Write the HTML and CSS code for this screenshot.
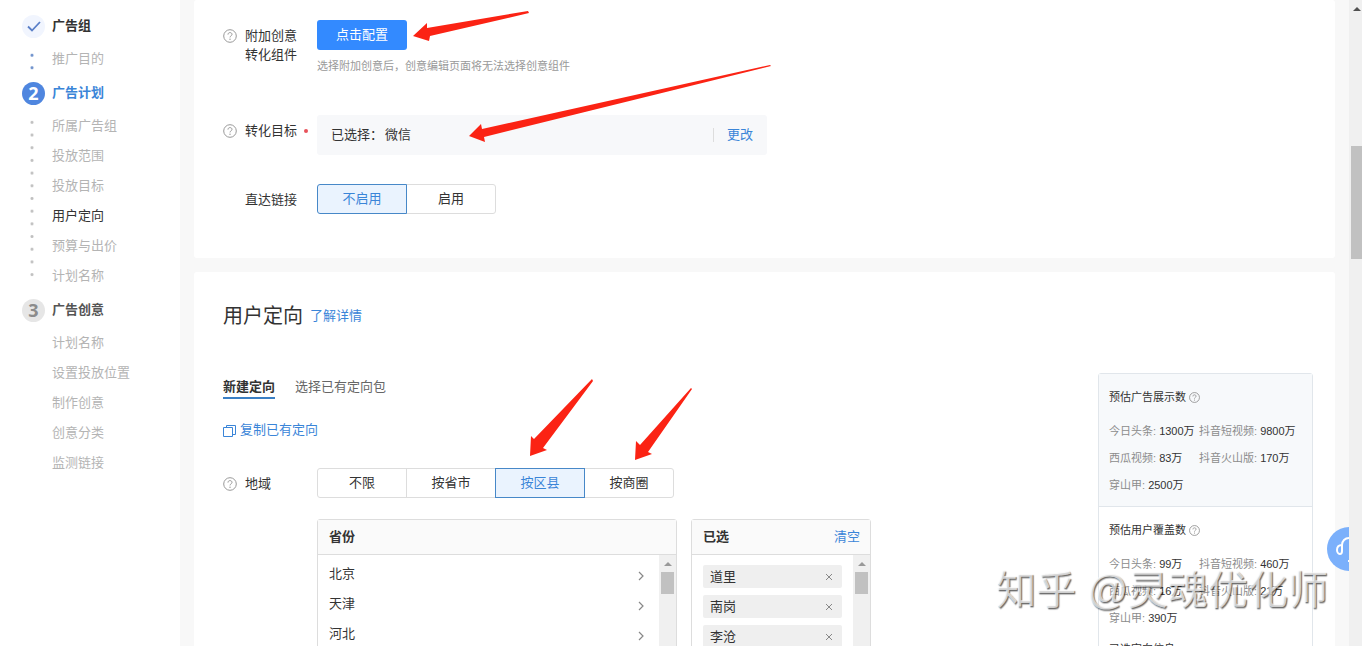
FILE: index.html
```
<!DOCTYPE html>
<html lang="zh-CN">
<head>
  <meta charset="UTF-8">
  <meta name="viewport" content="width=device-width, initial-scale=1.0">
  <title>广告计划</title>
  <link rel="stylesheet" href="styles.css">
</head>
<body>
  <svg class="defs" aria-hidden="true">
    <symbol id="icon-help" viewBox="0 0 14 14">
      <circle cx="7" cy="7" r="6.3" fill="none" stroke="currentColor"/>
      <path d="M5 5.6C5 4.3 5.8 3.6 7 3.6s2 .7 2 1.8c0 1.4-2 1.5-2 3" fill="none" stroke="currentColor"/>
      <circle cx="7" cy="10.2" r=".7" fill="currentColor"/>
    </symbol>
    <symbol id="icon-right" viewBox="0 0 6 10">
      <path d="M1 1l4 4-4 4" fill="none" stroke="currentColor" stroke-width="1.2"/>
    </symbol>
    <symbol id="icon-close" viewBox="0 0 8 8">
      <path d="M1 1l6 6M7 1L1 7" fill="none" stroke="currentColor"/>
    </symbol>
    <symbol id="icon-up" viewBox="0 0 8 4">
      <path d="M0 4l4-4 4 4z" fill="currentColor"/>
    </symbol>
  </svg>

  <div class="page">
    <nav class="sidebar">
      <section class="step">
        <h3 class="step-title">
          <span class="badge badge-done"><svg width="14" height="11" viewBox="0 0 14 11"><path d="M1 5.5l4 4L13 1" fill="none" stroke="currentColor" stroke-width="1.8"/></svg></span>
          广告组
        </h3>
        <div class="step-body">
          <span class="dots dots-blue"></span>
          <ul>
            <li><a href="#">推广目的</a></li>
          </ul>
        </div>
      </section>
      <section class="step">
        <h3 class="step-title current"><span class="badge badge-current">2</span>广告计划</h3>
        <div class="step-body">
          <span class="dots dots-long"></span>
          <ul>
            <li><a href="#">所属广告组</a></li>
            <li><a href="#">投放范围</a></li>
            <li><a href="#">投放目标</a></li>
            <li><a href="#" class="active">用户定向</a></li>
            <li><a href="#">预算与出价</a></li>
            <li><a href="#">计划名称</a></li>
          </ul>
        </div>
      </section>
      <section class="step">
        <h3 class="step-title todo"><span class="badge badge-todo">3</span>广告创意</h3>
        <div class="step-body">
          <span class="dots-none"></span>
          <ul>
            <li><a href="#">计划名称</a></li>
            <li><a href="#">设置投放位置</a></li>
            <li><a href="#">制作创意</a></li>
            <li><a href="#">创意分类</a></li>
            <li><a href="#">监测链接</a></li>
          </ul>
        </div>
      </section>
    </nav>

    <main class="main">
      <section class="card card-convert">
        <div class="row row-addon">
          <div class="label"><svg class="help"><use href="#icon-help"/></svg><span>附加创意<br>转化组件</span></div>
          <div class="control">
            <button class="btn-primary">点击配置</button>
            <p class="hint">选择附加创意后，创意编辑页面将无法选择创意组件</p>
          </div>
        </div>
        <div class="row row-goal">
          <div class="label"><svg class="help"><use href="#icon-help"/></svg><span>转化目标</span><i class="required"></i></div>
          <div class="goal">
            <span>已选择：</span>
            <span>微信</span>
            <a href="#">更改</a>
          </div>
        </div>
        <div class="row">
          <div class="label label-plain"><span>直达链接</span></div>
          <div class="segment">
            <button class="on">不启用</button>
            <button>启用</button>
          </div>
        </div>
      </section>

      <section class="card card-target">
        <div class="target">
          <header class="card-title">
            <h2>用户定向</h2>
            <a href="#">了解详情</a>
          </header>
          <div class="tabs">
            <button class="tab tab-on">新建定向</button>
            <button class="tab">选择已有定向包</button>
          </div>
          <a href="#" class="copy">
            <svg width="13" height="13" viewBox="0 0 13 13" fill="none" stroke="currentColor"><path d="M.5 3.5h9v9h-9zM3.5 3.5v-2h9v9h-3"/></svg>
            复制已有定向
          </a>
          <div class="row">
            <div class="label"><svg class="help"><use href="#icon-help"/></svg><span>地域</span></div>
            <div class="control">
              <div class="segment">
                <button>不限</button>
                <button>按省市</button>
                <button class="on">按区县</button>
                <button>按商圈</button>
              </div>
              <div class="pickers">
                <div class="picker picker-province">
                  <div class="picker-head"><b>省份</b></div>
                  <div class="picker-body">
                    <ul class="provinces">
                      <li><button>北京<svg><use href="#icon-right"/></svg></button></li>
                      <li><button>天津<svg><use href="#icon-right"/></svg></button></li>
                      <li><button>河北<svg><use href="#icon-right"/></svg></button></li>
                    </ul>
                    <div class="scroll"><svg><use href="#icon-up"/></svg><span class="thumb"></span></div>
                  </div>
                </div>
                <div class="picker picker-chosen">
                  <div class="picker-head"><b>已选</b><a href="#">清空</a></div>
                  <div class="picker-body">
                    <ul class="chips">
                      <li>道里<button aria-label="删除道里"><svg><use href="#icon-close"/></svg></button></li>
                      <li>南岗<button aria-label="删除南岗"><svg><use href="#icon-close"/></svg></button></li>
                      <li>李沧<button aria-label="删除李沧"><svg><use href="#icon-close"/></svg></button></li>
                    </ul>
                    <div class="scroll"><svg><use href="#icon-up"/></svg><span class="thumb"></span></div>
                  </div>
                </div>
              </div>
            </div>
          </div>
        </div>

        <aside class="estimate">
          <section class="estimate-box estimate-top">
            <h4>预估广告展示数<svg class="help-small"><use href="#icon-help"/></svg></h4>
            <ul>
              <li>今日头条: <b>1300万</b></li>
              <li>抖音短视频: <b>9800万</b></li>
              <li>西瓜视频: <b>83万</b></li>
              <li>抖音火山版: <b>170万</b></li>
              <li>穿山甲: <b>2500万</b></li>
            </ul>
          </section>
          <section class="estimate-box">
            <h4>预估用户覆盖数<svg class="help-small"><use href="#icon-help"/></svg></h4>
            <ul>
              <li>今日头条: <b>99万</b></li>
              <li>抖音短视频: <b>460万</b></li>
              <li>西瓜视频: <b>16万</b></li>
              <li>抖音火山版: <b>21万</b></li>
              <li>穿山甲: <b>390万</b></li>
            </ul>
            <h4>已选定向信息</h4>
          </section>
        </aside>
      </section>

      <button class="service" aria-label="客服">
        <svg width="44" height="44" viewBox="0 0 44 44" fill="none" stroke="#fff" stroke-width="2">
          <path d="M15 18c-3 0-5 2-5 5s2 4 3 4 2-1 2-3v-6c0-4 3-7 7-7s7 3 7 7v6c0 2 1 3 2 3s3-1 3-4-2-5-4-5"/>
          <path d="M31 27c0 4-3 7-10 7"/>
        </svg>
      </button>
    </main>

    <div class="page-scroll"><svg><use href="#icon-up"/></svg><span class="page-thumb"></span></div>

    <svg class="arrows" width="800" height="480" viewBox="0 0 800 480" fill="#fb2314">
      <path d="M413 36l14-13v5l101-17 1 2-99 23-1 5z"/>
      <path d="M469 136l12-12 1 5L770 65l1 1-287 71 1 5z"/>
      <path d="M530 456l1-20 3 3 58-60 1 2-50 67 4 2z"/>
      <path d="M635 460l1-19 4 4 51-57 1 1-44 63 4 2z"/>
    </svg>
    <div class="watermark">知乎 @灵魂优化师</div>
  </div>
</body>
</html>
```
FILE: styles.css
```
* {
  box-sizing: border-box;
}
body {
  margin: 0;
  background: #f8f8f8;
  color: #333;
  font-family: "Liberation Sans", "Noto Sans CJK SC", sans-serif;
  font-size: 13px;
  line-height: 18px;
}
ul, h2, h3, h4, p {
  margin: 0;
  padding: 0;
  list-style: none;
  font-weight: normal;
}
a {
  color: #3a85d8;
  text-decoration: none;
}
button {
  font: inherit;
  color: inherit;
  padding: 0;
  border: none;
  background: none;
  cursor: pointer;
}
.defs {
  display: none;
}
.page {
  position: relative;
  display: flex;
  height: 100vh;
  overflow: hidden;
}

/* sidebar */
.sidebar {
  flex: 0 0 180px;
  padding-top: 9px;
  background: #fff;
}
.step {
  margin-bottom: 2px;
}
.step-title {
  display: flex;
  align-items: center;
  gap: 7px;
  height: 34px;
  padding-left: 22px;
  font-size: 13px;
  font-weight: bold;
}
.step-title.current {
  color: #3a85d8;
}
.step-title.todo {
  color: #555;
}
.badge {
  display: flex;
  align-items: center;
  justify-content: center;
  width: 23px;
  height: 23px;
  border-radius: 50%;
  font-family: "Noto Sans", sans-serif;
  font-size: 18px;
}
.badge-done {
  background: #f1f5fe;
  color: #5a7fc8;
}
.badge-current {
  background: #4f86df;
  color: #fff;
}
.badge-todo {
  background: #e6e6e6;
  color: #8c8c8c;
}
.step-body {
  display: flex;
  padding-top: 1px;
}
.step-body a {
  display: block;
  line-height: 30px;
  color: #b4b4b4;
}
.step-body a.active {
  color: #333;
}
.dots {
  width: 4px;
  margin: 5px 18px 0 30px;
  background-image: radial-gradient(circle, #c0c0c0 1px, transparent 2px);
  background-size: 4px 13px;
  background-repeat: no-repeat round;
}
.dots-blue {
  background-image: radial-gradient(circle, #6f92cc 1px, transparent 2px);
}
.dots-long {
  margin-bottom: 10px;
}
.dots-none {
  width: 52px;
}

/* content */
.main {
  position: relative;
  flex: 1;
  min-width: 0;
  padding: 0 14px;
  overflow: hidden;
}
.card {
  background: #fff;
  border-radius: 3px;
}
.card-convert {
  padding: 20px 29px 44px;
  margin-bottom: 14px;
}
.card-target {
  display: flex;
  padding: 29px 22px 29px 29px;
}
.row {
  display: flex;
  align-items: flex-start;
}
.row-addon {
  margin-bottom: 40px;
}
.row-goal {
  margin-bottom: 29px;
}
.label {
  display: flex;
  flex: 0 0 94px;
  padding-top: 6px;
  line-height: 19px;
}
.label-plain {
  padding-left: 22px;
}
.help {
  width: 14px;
  height: 14px;
  margin: 3px 8px 0 0;
  color: #999;
}
.required {
  width: 4px;
  height: 4px;
  margin: 8px 0 0 7px;
  border-radius: 50%;
  background: #e8525a;
}
.btn-primary {
  display: block;
  width: 90px;
  height: 30px;
  border-radius: 3px;
  background: #338aff;
  color: #fff;
}
.hint {
  margin-top: 7px;
  font-size: 11px;
  color: #999;
}
.goal {
  display: flex;
  align-items: center;
  gap: 2px;
  flex: 0 1 450px;
  height: 40px;
  padding: 0 14px;
  border-radius: 3px;
  background: #f7f8fa;
}
.goal a {
  margin-left: auto;
  padding-left: 13px;
  border-left: 1px solid #ddd;
  line-height: 14px;
}
.segment {
  display: flex;
}
.segment button {
  width: 90px;
  height: 30px;
  margin-right: -1px;
  border: 1px solid #ddd;
  background: #fff;
}
.segment button:first-child {
  border-radius: 3px 0 0 3px;
}
.segment button:last-child {
  border-radius: 0 3px 3px 0;
}
.segment .on {
  position: relative;
  border-color: #4788c8;
  background: #eaf3fe;
  color: #3a85d8;
}

/* targeting */
.target {
  flex: 1;
}
.card-title {
  display: flex;
  align-items: center;
  gap: 7px;
  height: 30px;
}
.card-title h2 {
  font-size: 20px;
}
.tabs {
  display: flex;
  gap: 20px;
  margin-top: 45px;
}
.tab {
  height: 23px;
  border-bottom: 2px solid transparent;
  line-height: 20px;
  color: #666;
}
.tab-on {
  border-color: #3a7fc4;
  font-weight: bold;
  color: #333;
}
.copy {
  display: flex;
  align-items: center;
  gap: 4px;
  width: max-content;
  height: 20px;
  margin: 21px 0 28px;
}
.pickers {
  display: flex;
  gap: 14px;
  margin-top: 21px;
}
.picker {
  border: 1px solid #ddd;
  border-radius: 3px;
}
.picker-province {
  width: 360px;
}
.picker-chosen {
  width: 180px;
}
.picker-head {
  display: flex;
  justify-content: space-between;
  align-items: center;
  height: 35px;
  padding: 0 10px 0 11px;
  border-bottom: 1px solid #ddd;
  background: #fafafa;
}
.picker-body {
  display: flex;
  height: 240px;
  overflow: hidden;
}
.picker-body ul {
  flex: 1;
}
.provinces {
  padding-top: 4px;
}
.provinces button {
  display: flex;
  justify-content: space-between;
  align-items: center;
  width: 100%;
  height: 30px;
  padding: 0 15px 0 11px;
}
.provinces svg {
  width: 6px;
  height: 10px;
  margin-top: 4px;
  color: #888;
}
.chips {
  padding: 10px 11px;
}
.chips li {
  display: flex;
  justify-content: space-between;
  align-items: center;
  height: 23px;
  margin-bottom: 7px;
  padding: 0 9px 0 7px;
  border-radius: 2px;
  background: #efefef;
}
.chips button,
.chips svg {
  display: block;
  width: 8px;
  height: 8px;
  color: #888;
}
.scroll {
  display: flex;
  flex-direction: column;
  align-items: center;
  gap: 6px;
  width: 17px;
  padding-top: 7px;
  background: #f0f0f0;
}
.scroll svg {
  width: 8px;
  height: 4px;
  color: #999;
}
.thumb {
  width: 13px;
  height: 22px;
  background: #c1c1c1;
}

/* estimate panel */
.estimate {
  flex: 0 0 215px;
  margin-top: 72px;
  border: 1px solid #e1e6eb;
  border-radius: 3px;
  font-size: 11px;
}
.estimate-box {
  padding: 10px 0 7px 10px;
}
.estimate-top {
  border-bottom: 1px solid #e1e6eb;
  background: #f7f9fb;
}
.estimate h4 {
  display: flex;
  align-items: center;
  gap: 3px;
  height: 26px;
  margin-bottom: 8px;
  font-size: 11px;
}
.help-small {
  width: 11px;
  height: 11px;
  color: #888;
}
.estimate ul {
  display: grid;
  grid-template-columns: 90px 1fr;
  margin-bottom: 4px;
}
.estimate-top ul {
  margin-bottom: 0;
}
.estimate li {
  line-height: 27px;
  color: #8c8c8c;
  white-space: nowrap;
}
.estimate b {
  font-weight: normal;
  color: #333;
}
.service {
  position: absolute;
  top: 527px;
  right: -22px;
  width: 44px;
  height: 44px;
  border-radius: 50%;
  background: #7bb0fb;
}

.page-scroll {
  display: flex;
  flex: 0 0 13px;
  flex-direction: column;
  align-items: center;
  padding: 7px 0 0 2px;
  background: #f0f0f0;
}
.page-scroll svg {
  width: 8px;
  height: 4px;
  color: #505050;
}
.page-thumb {
  width: 11px;
  height: 113px;
  margin-top: 135px;
  background: #c1c1c1;
}

/* annotations over the page */
.arrows {
  position: absolute;
  top: 0;
  left: 0;
  pointer-events: none;
}
.watermark {
  position: absolute;
  right: 34px;
  bottom: 26px;
  font-size: 40px;
  line-height: 60px;
  color: rgba(255, 255, 255, 0.7);
  text-shadow: 1px 1px 1px rgba(0, 0, 0, 0.5), 1px 2px 1px rgba(0, 0, 0, 0.2);
  pointer-events: none;
}
```
